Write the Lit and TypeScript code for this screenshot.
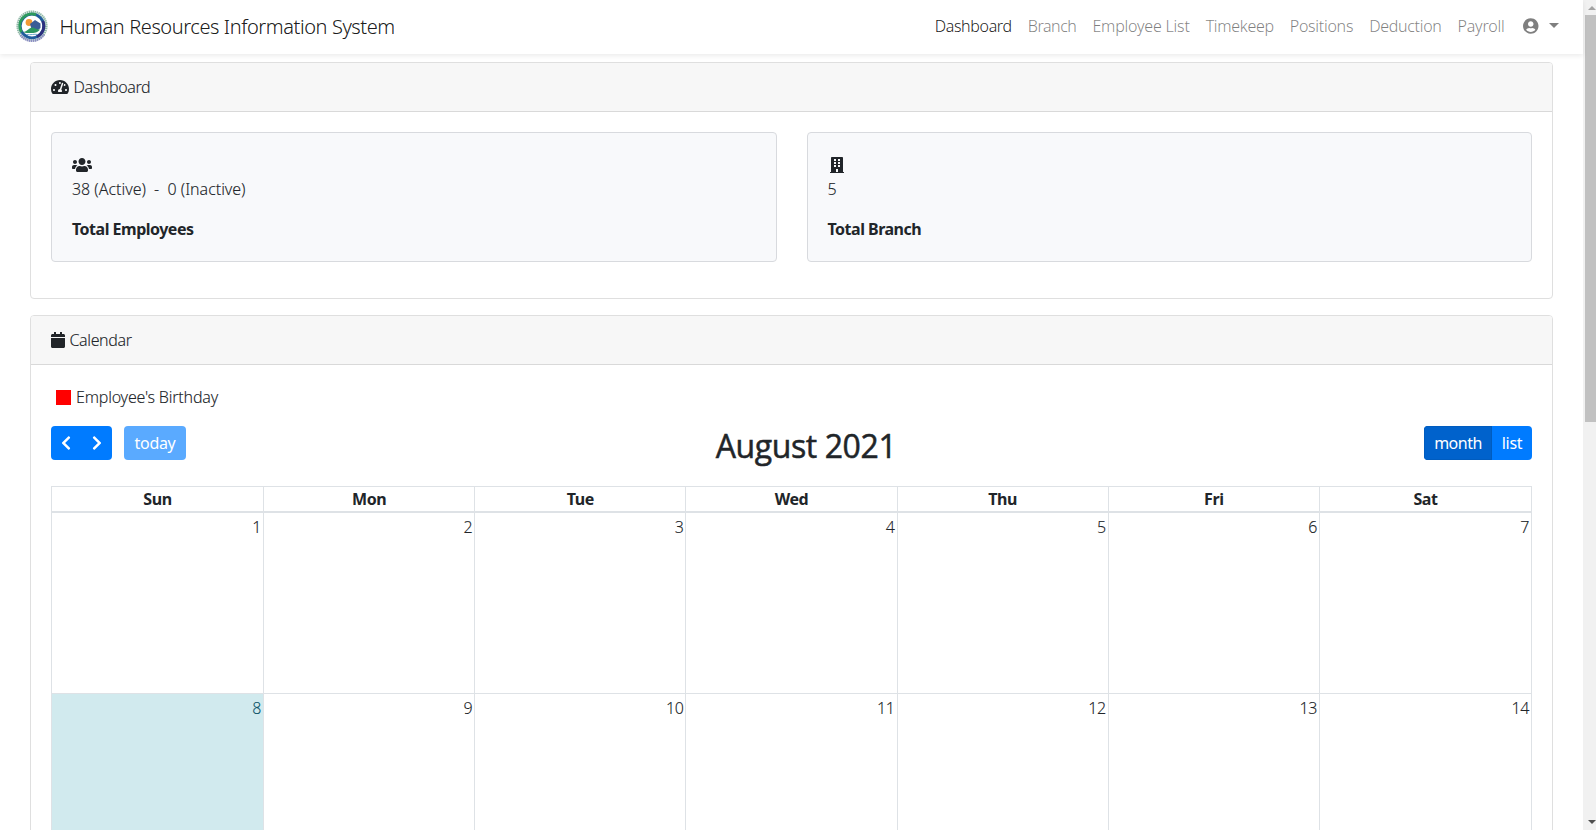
import { LitElement, html, css, svg } from 'lit';
import { customElement, property } from 'lit/decorators.js';
import { classMap } from 'lit/directives/class-map.js';
import { styleMap } from 'lit/directives/style-map.js';

const ICONS: Record<string, [number, string]> = {
  gauge: [576, 'M288 32C128.94 32 0 160.94 0 320c0 52.8 14.25 102.26 39.06 144.8 5.61 9.62 16.3 15.2 27.44 15.2h443c11.14 0 21.83-5.58 27.44-15.2C561.75 422.26 576 372.8 576 320c0-159.06-128.94-288-288-288zm0 64c14.71 0 26.58 10.13 30.32 23.65-1.11 2.26-2.64 4.23-3.45 6.67l-9.22 27.67c-5.13 3.49-10.97 6.01-17.64 6.01-17.67 0-32-14.33-32-32S270.33 96 288 96zM96 384c-17.67 0-32-14.33-32-32s14.33-32 32-32 32 14.33 32 32-14.33 32-32 32zm48-160c-17.67 0-32-14.33-32-32s14.33-32 32-32 32 14.33 32 32-14.33 32-32 32zm246.77-72.41l-61.33 184C343.13 347.33 352 364.54 352 384c0 11.72-3.38 22.55-8.88 32H232.88c-5.5-9.45-8.88-20.28-8.88-32 0-33.94 26.5-61.43 59.9-63.59l61.34-184.01c4.17-12.56 17.73-19.45 30.36-15.17 12.57 4.19 19.35 17.79 15.17 30.36zm14.66 57.2l15.52-46.55c3.47-1.29 7.13-2.23 11.05-2.23 17.67 0 32 14.33 32 32s-14.33 32-32 32c-11.38-.01-20.89-6.28-26.57-15.22zM480 384c-17.67 0-32-14.33-32-32s14.33-32 32-32 32 14.33 32 32-14.33 32-32 32z'],
  users: [640, 'M96 224c35.3 0 64-28.7 64-64s-28.7-64-64-64-64 28.7-64 64 28.7 64 64 64zm448 0c35.3 0 64-28.7 64-64s-28.7-64-64-64-64 28.7-64 64 28.7 64 64 64zm32 32h-64c-17.6 0-33.5 7.1-45.1 18.6 40.3 22.1 68.9 62 75.1 109.4h66c17.7 0 32-14.3 32-32v-32c0-35.3-28.7-64-64-64zm-256 0c61.9 0 112-50.1 112-112S381.9 32 320 32 208 82.1 208 144s50.1 112 112 112zm76.8 32h-8.3c-20.8 10-43.9 16-68.5 16s-47.6-6-68.5-16h-8.3C179.6 288 128 339.6 128 403.2V432c0 26.5 21.5 48 48 48h288c26.5 0 48-21.5 48-48v-28.8c0-63.6-51.6-115.2-115.2-115.2zm-223.7-13.4C161.5 263.1 145.6 256 128 256H64c-35.3 0-64 28.7-64 64v32c0 17.7 14.3 32 32 32h65.9c6.3-47.4 34.9-87.3 75.2-109.4z'],
  building: [448, 'M436 480h-20V24c0-13.3-10.7-24-24-24H56C42.7 0 32 10.7 32 24v456H12c-6.6 0-12 5.4-12 12v20h448v-20c0-6.6-5.4-12-12-12zM128 64h64v64h-64zM256 64h64v64h-64zM128 160h64v64h-64zM256 160h64v64h-64zM128 256h64v64h-64zM256 256h64v64h-64zM192 384h64v96h-64z'],
  calendar: [448, 'M12 192h424c6.6 0 12 5.4 12 12v260c0 26.5-21.5 48-48 48H48c-26.5 0-48-21.5-48-48V204c0-6.6 5.4-12 12-12zm436-44v-36c0-26.5-21.5-48-48-48h-48V12c0-6.6-5.4-12-12-12h-40c-6.6 0-12 5.4-12 12v52H160V12c0-6.6-5.4-12-12-12h-40c-6.6 0-12 5.4-12 12v52H48C21.5 64 0 85.5 0 112v36c0 6.6 5.4 12 12 12h424c6.6 0 12-5.4 12-12z'],
  user: [496, 'M248 8C111 8 0 119 0 256s111 248 248 248 248-111 248-248S385 8 248 8zm0 96c48.6 0 88 39.4 88 88s-39.4 88-88 88-88-39.4-88-88 39.4-88 88-88zm0 344c-58.7 0-111.3-26.6-146.5-68.2 18.8-35.4 55.6-59.8 98.5-59.8 2.4 0 4.8.4 7.1 1.1 13 4.2 26.6 6.9 40.9 6.9 14.3 0 28-2.7 40.9-6.9 2.3-.7 4.7-1.1 7.1-1.1 42.9 0 79.7 24.4 98.5 59.8C359.3 421.4 306.7 448 248 448z'],
  prev: [320, 'M34.52 239.03L228.87 44.69c9.37-9.37 24.57-9.37 33.94 0l22.67 22.67c9.36 9.36 9.37 24.52.04 33.9L131.49 256l154.02 154.75c9.34 9.38 9.32 24.54-.04 33.9l-22.67 22.67c-9.37 9.37-24.57 9.37-33.94 0L34.52 272.97c-9.37-9.37-9.37-24.57 0-33.94z'],
  next: [320, 'M285.48 272.97L91.13 467.31c-9.37 9.37-24.57 9.37-33.94 0l-22.67-22.67c-9.36-9.36-9.37-24.52-.04-33.9L188.51 256 34.49 101.25c-9.34-9.38-9.32-24.54.04-33.9l22.67-22.67c9.37-9.37 24.57-9.37 33.94 0L285.48 239.03c9.37 9.37 9.37 24.57 0 33.94z'],
};

@customElement('fa-icon')
class FaIcon extends LitElement {
  static styles = css`
    :host { display: inline-flex; flex: none; }
    svg { display: block; fill: currentColor; fill-rule: evenodd; }
  `;
  @property() name = 'user';
  render() {
    const [w, d] = ICONS[this.name];
    return html`<svg width=${w / 32} height="16" viewBox="0 0 ${w} 512">${svg`<path d=${d}></path>`}</svg>`;
  }
}

@customElement('hr-navbar')
class HrNavbar extends LitElement {
  static styles = css`
    :host { display: block; position: relative; }
    .bar { display: flex; align-items: center; justify-content: space-between; height: 54px; box-sizing: border-box; padding: 0 24px 0 16px; background: #fff; box-shadow: 0 2px 5px rgba(0, 0, 0, 0.08); }
    .brand { display: flex; align-items: center; gap: 11.5px; font-size: 20px; line-height: 30px; letter-spacing: -0.41px; color: rgba(0, 0, 0, 0.9); padding-bottom: 2px; }
    .brand svg { display: block; }
    .title { padding-top: 2px; }
    .links { display: flex; line-height: 24px; gap: 16px; color: rgba(0, 0, 0, 0.5); padding-bottom: 2px; white-space: nowrap; -webkit-text-stroke: 0; }
    .active { color: rgba(0, 0, 0, 0.9); }
    .account { display: flex; align-items: center; gap: 10.5px; padding-left: 2.5px; }
    .caret { border-top: 5px solid; border-left: 5px solid transparent; border-right: 5px solid transparent; margin-top: -1px; }
  `;
  private links: [string, number][] = [
    ['Dashboard', -0.34], ['Branch', -0.45], ['Employee List', -0.2], ['Timekeep', -0.3],
    ['Positions', -0.27], ['Deduction', -0.3], ['Payroll', -0.2],
  ];
  render() {
    return html`
      <div class="bar">
        <div class="brand">
          <svg width="32" height="32" viewBox="0 0 32 32">
            <circle cx="16" cy="16" r="14.4" fill="#fff" stroke="#8fb8a6" stroke-width="2.4" stroke-dasharray="1.4 .6"/>
            <path d="M4.5 25A14.4 14.4 0 0 0 28 24.5" fill="none" stroke="#8c8cc4" stroke-width="2.4" stroke-dasharray="1.4 .6"/>
            <circle cx="16" cy="16" r="11.8" fill="#fff" stroke="#1f5c9c" stroke-width="2.8"/>
            <path d="M5.5 22A11.800 11.800 0 0 1 20 4.9" fill="none" stroke="#2c9a5c" stroke-width="2.8"/>
            <path d="M26.800 11A11.800 11.800 0 0 1 21 26.700" fill="none" stroke="#2b2f7d" stroke-width="2.8"/>
            <circle cx="13" cy="12.5" r="3.4" fill="#f39a35"/>
            <path d="M14 14l5-4 5.500 3.500v4.500l-3 2.500-6-1.500z" fill="#3b5c96"/>
            <path d="M7 22c4.500 0 5.500-4.500 9.500-4.500 2 0 3 2 7.500 2-2 3-6 3.500-9 3.500s-6 .3-8-1z" fill="#2c9660"/>
            <path d="M10.500 24.500c4 .8 8-.8 11 0" fill="none" stroke="#6fa9cc" stroke-width="1"/>
          </svg>
          <span class="title">Human Resources Information System</span>
        </div>
        <nav class="links">
          ${this.links.map(([t, s], i) => html`<span class=${classMap({ active: i === 0 })} style=${styleMap({ letterSpacing: `${s}px` })}>${t}</span>`)}
          <span class="account"><fa-icon name="user"></fa-icon><i class="caret"></i></span>
        </nav>
      </div>`;
  }
}

@customElement('hr-card')
class HrCard extends LitElement {
  static styles = css`
    :host { display: block; border: 1px solid #dfdfdf; border-radius: 4px; background: #fff; }
    .head { display: flex; align-items: center; gap: 4.5px; height: 48px; padding: 0 20px; background: #f7f7f7; border-bottom: 1px solid #d9d9d9; border-radius: 3px 3px 0 0; letter-spacing: -0.38px; }
    .body { padding: 20px; }
  `;
  @property() icon = '';
  @property() heading = '';
  render() {
    return html`<div class="head"><fa-icon name=${this.icon}></fa-icon><span>${this.heading}</span></div>
      <div class="body"><slot></slot></div>`;
  }
}

@customElement('hr-calendar')
class HrCalendar extends LitElement {
  static styles = css`
    :host { display: block; }
    .legend { display: flex; align-items: center; height: 24px; gap: 5px; padding-left: 5px; letter-spacing: -0.2px; }
    .swatch { width: 15px; height: 15px; background: red; }
    .toolbar { display: grid; grid-template-columns: 135px 1fr 108px; align-items: start; margin-top: 17px; height: 60px; }
    .left, .group { display: flex; }
    .left { gap: 12px; }
    .group { border-radius: 4px; overflow: hidden; }
    .btn { display: flex; align-items: center; justify-content: center; height: 34px; box-sizing: border-box; background: #007bff; color: #fff; font-weight: 400; -webkit-text-stroke: 0; letter-spacing: -0.5px; }
    .arrow { width: 30.5px; padding-bottom: 1px; }
    .today { width: 62px; border-radius: 4px; background: #5aaaff; letter-spacing: -0.3px; }
    .month { width: 68px; background: #0062cc; box-shadow: inset 0 0 0 1px #005cbf; }
    .list { width: 40px; letter-spacing: -0.3px; }
    h2 { margin: 0; text-align: center; font: 400 32px/40px "Open Sans", sans-serif; letter-spacing: -0.4px; color: #212529; -webkit-text-stroke: 0.5px #212529; padding-left: 2px; }
    .grid { display: grid; grid-template-columns: 212px repeat(5, 211.2px) 1fr; border-left: 1px solid #dee2e6; border-top: 1px solid #dee2e6; }
    .th { height: 24px; line-height: 24px; text-align: center; font-weight: 700; -webkit-text-stroke: 0; border-right: 1px solid #dee2e6; border-bottom: 2px solid #dee2e6; letter-spacing: -0.4px; }
    .day { height: 180px; text-align: right; line-height: 24px; border-right: 1px solid #dee2e6; border-bottom: 1px solid #dee2e6; letter-spacing: -0.4px; }
    .num { padding: 2px 2px 0 0; }
    .now { background: #d1eaee; color: #0c5468; }
  `;
  render() {
    return html`
      <div class="legend"><i class="swatch"></i><span>Employee's Birthday</span></div>
      <div class="toolbar">
        <div class="left">
          <div class="group"><span class="btn arrow"><fa-icon name="prev"></fa-icon></span><span class="btn arrow"><fa-icon name="next"></fa-icon></span></div>
          <span class="btn today">today</span>
        </div>
        <h2>August 2021</h2>
        <div class="group"><span class="btn month">month</span><span class="btn list">list</span></div>
      </div>
      <div class="grid">
        ${['Sun', 'Mon', 'Tue', 'Wed', 'Thu', 'Fri', 'Sat'].map((d) => html`<div class="th">${d}</div>`)}
        ${Array.from({ length: 14 }, (_, i) => html`<div class=${classMap({ day: true, now: i === 7 })}><div class="num">${i + 1}</div></div>`)}
      </div>`;
  }
}

@customElement('app-root')
class AppRoot extends LitElement {
  static styles = css`
    :host { display: flex; height: 830px; overflow: hidden; background: #fff; color: #212529; font: 300 16px/24px "Noto Sans", "Open Sans", sans-serif; -webkit-text-stroke: 0.1px; }
    .page { width: 1583px; flex: none; }
    .content { display: flex; flex-direction: column; gap: 16px; padding: 8px 30px 0; }
    hr-navbar { z-index: 1; }
    .stats { display: grid; grid-template-columns: 1fr 1fr; gap: 30px; padding-bottom: 16px; }
    .stat { border: 1px solid #d8dade; border-radius: 4px; background: #f8f9fb; padding: 20px; }
    .ico { display: flex; align-items: center; height: 24px; }
    .narrow { padding-left: 2.5px; }
    .value { white-space: pre; letter-spacing: -0.03px; }
    .label { margin-top: 16px; font-weight: 700; -webkit-text-stroke: 0; letter-spacing: -0.5px; }
    .scroll { flex: 1; display: flex; flex-direction: column; background: #f1f1f1; height: 830px; }
    .up, .down { height: 15px; display: flex; align-items: center; justify-content: center; padding-left: 4px; }
    .down { margin-top: auto; height: 16px; }
    .up i { border: 4px solid transparent; border-top: 0; border-bottom: 4px solid #a3a3a3; }
    .down i { border: 4px solid transparent; border-bottom: 0; border-top: 4px solid #505050; }
    .thumb { height: 407px; margin-left: 2px; background: #c1c1c1; }
  `;
  render() {
    return html`
      <div class="page">
        <hr-navbar></hr-navbar>
        <div class="content">
          <hr-card icon="gauge" heading="Dashboard">
            <div class="stats">
              <div class="stat">
                <div class="ico"><fa-icon name="users"></fa-icon></div>
                <div class="value">38 (Active)  -  0 (Inactive)</div>
                <div class="label">Total Employees</div>
              </div>
              <div class="stat">
                <div class="ico narrow"><fa-icon name="building"></fa-icon></div>
                <div class="value">5</div>
                <div class="label">Total Branch</div>
              </div>
            </div>
          </hr-card>
          <hr-card icon="calendar" heading="Calendar"><hr-calendar></hr-calendar></hr-card>
        </div>
      </div>
      <div class="scroll"><div class="up"><i></i></div><div class="thumb"></div><div class="down"><i></i></div></div>`;
  }
}
